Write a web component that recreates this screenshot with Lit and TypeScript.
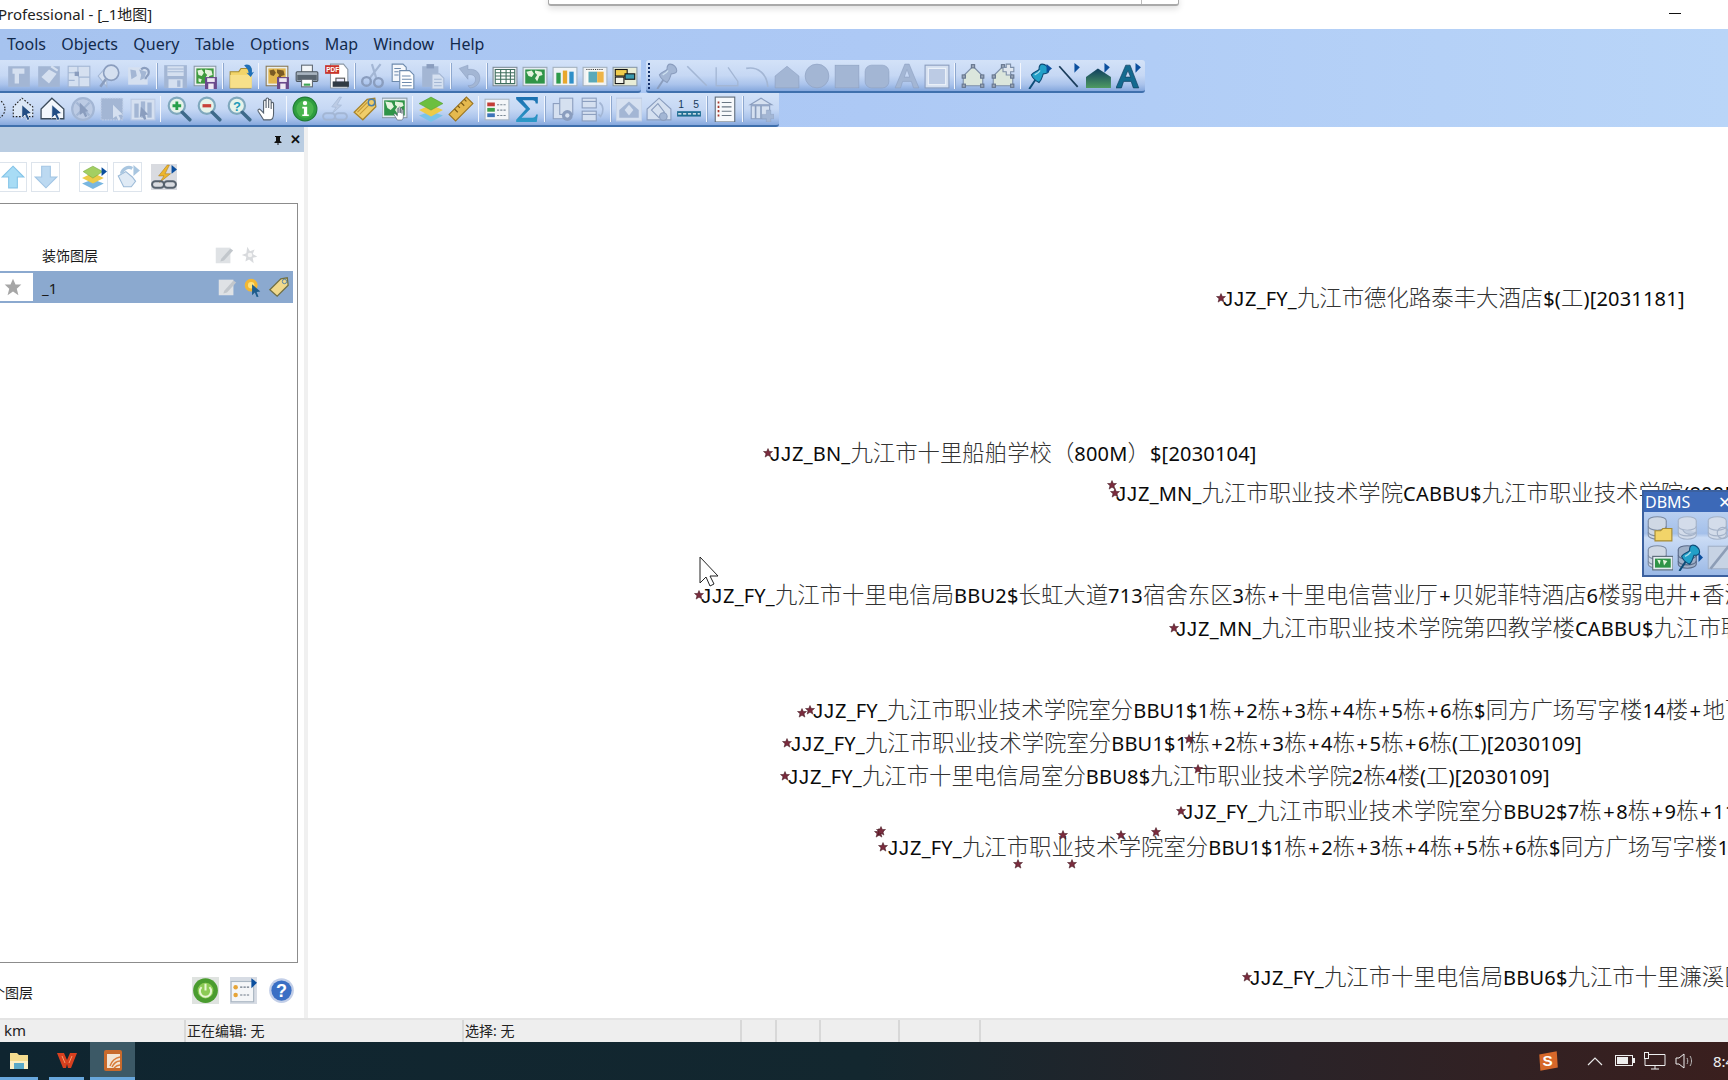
import { LitElement, html, css, svg, nothing } from "lit";
import { customElement } from "lit/decorators.js";

const DIS = "#a3b6d4", DIS2 = "#bccbe4", DIS3 = "#d5e0f0", DISD = "#8a9dbe";

const arrowTip = svg`<path d="M19 1l5 4-5 4z" fill="#0b4f9e"/>`;
const mag = (sign: unknown, fill = "#e6f3ea") => svg`<circle cx="10" cy="9" r="7.5" fill="${fill}" stroke="#7fa8bd" stroke-width="2"/><path d="M15 15l7 7" stroke="#3f6a8a" stroke-width="3.2" stroke-linecap="round"/>${sign}`;
const mapTile = svg`<rect x="2" y="3" width="20" height="18" fill="#e8eef0" stroke="#8a9aa8"/><rect x="4" y="5" width="16" height="14" fill="#3f9a3e"/><path d="M5 7l4-1 2 3-2 3-3-1zM12 6l6 1 1 4-3 1-2 5-2-3 2-3-2-2zM6 14l3 1-1 3-2-1z" fill="#e4f3dc"/>`;
const floppy = (c: string) => svg`<rect x="12" y="13" width="11" height="11" fill="${c}"/><rect x="14" y="14" width="7" height="3.5" fill="#efe9f3"/><rect x="15" y="19" width="5" height="5" fill="#efe9f3"/>`;
const cursorPt = (c = "#234e84") => svg`<path d="M11 8l9 8-4 .6 2.4 5-2.4 1-2.2-5-3 3z" fill="${c}" stroke="#fff" stroke-width=".6"/>`;
const disSq = svg`<rect x="2" y="3" width="20" height="19" fill="${DIS}"/>`;
const handles = svg`<path d="M12 3L21 12v9H3v-9z" fill="#dbe6dc" stroke="#7d8fa8"/><g fill="#9aa6b8" stroke="#66768e"><rect x="10.5" y="1.500" width="3" height="3"/><rect x="2" y="11" width="3" height="3"/><rect x="19" y="11" width="3" height="3"/><rect x="2" y="19.500" width="3" height="3"/><rect x="19" y="19.500" width="3" height="3"/></g>`;
const hand = svg`<path d="M7 22l-5-8c-.8-1.500 1-2.500 2-1.400l3 3V5c0-1.600 2.300-1.600 2.300 0v6V3c0-1.600 2.400-1.600 2.400 0v8V4.500c0-1.600 2.300-1.600 2.300 0V12V7c0-1.500 2.200-1.500 2.200 0v9c0 3-1 6-3 6z" fill="#fff" stroke="#55606c"/>`;
const db = (c = "#cfd8e4", e = "#7c8ba3") => svg`<ellipse cx="10" cy="5" rx="8" ry="3.500" fill="${c}" stroke="${e}"/><path d="M2 5v13c0 2 3.500 3.500 8 3.500s8-1.500 8-3.500V5" fill="${c}" stroke="${e}"/><path d="M2 10c0 2 3.500 3.500 8 3.500s8-1.500 8-3.500M2 15c0 2 3.500 3.500 8 3.500s8-1.500 8-3.500" fill="none" stroke="${e}"/>`;
const pin = (a: string, b: string) => svg`<path d="M3 24l6-9" stroke="${b}" stroke-width="1.800"/><path d="M5 11c2-3 5-3 7-5 0-3 1-5 3-5 3 0 6 3 6 6 0 2-2 3-5 3-1 2-1 5-4 8-2-1-6-4-7-7z" fill="${a}" stroke="${b}"/><path d="M8 11c2-1 4-2 5-4" stroke="#dff3fb" fill="none" stroke-width="1.200" opacity=".7"/>`;

const ICONS: Record<string, unknown> = {
  sq: disSq,
  pick1: svg`${disSq}<path d="M6 5h11v5h-5v9H8v-9H6z" fill="${DIS3}"/>`,
  pick2: svg`${disSq}<path d="M5 13l7-7 7 4-7 9z" fill="${DIS3}"/><path d="M14 3l6 4" stroke="${DIS3}" stroke-width="2"/>`,
  pick3: svg`<rect x="2" y="3" width="20" height="19" fill="${DIS3}" stroke="${DIS}"/><path d="M2 9h7l3 4h10M11 3v6M12 13v9M2 16h6" stroke="${DIS}" fill="none"/><rect x="8" y="8" width="4" height="4" fill="${DISD}"/>`,
  magPoly: svg`<path d="M2 12l8-9v19z" fill="${DIS3}" stroke="${DIS}"/><circle cx="14" cy="9" r="7" fill="${DIS3}" stroke="${DISD}" stroke-width="1.500"/><path d="M9 15l-5 7" stroke="${DISD}" stroke-width="2.400"/>`,
  mapQ: svg`<rect x="2" y="4" width="18" height="16" fill="${DIS3}"/><path d="M4 6l5 1 1 5-5 3zM12 6l7 2-2 6-4 2 1-5z" fill="${DIS}"/><path d="M14 6a4 4 0 0 1 7 3c0 3-3 3-3 6" fill="none" stroke="${DISD}" stroke-width="2"/>`,
  floppyD: svg`<rect x="2" y="2" width="21" height="21" fill="${DIS}"/><rect x="5" y="3" width="15" height="9" fill="${DIS3}"/><path d="M5 5.500h15M5 8h15" stroke="${DIS}"/><rect x="6" y="15" width="13" height="8" fill="${DIS3}"/><rect x="14" y="16" width="3" height="6" fill="${DIS}"/>`,
  mapSave: svg`${mapTile}${floppy("#6a4a8c")}`,
  folder: svg`<path d="M2 8h8l2-3h9v18H2z" fill="#f2d469" stroke="#a58a33"/><path d="M2 11h20v12H2z" fill="#f7e08a"/><path d="M15 2c4-2 8 1 7 7l2-1-3 5-4-4 2 .4c0-3-2-5-4-7z" fill="#1e6fb8"/>`,
  mapSave2: svg`<rect x="2" y="3" width="20" height="18" fill="#e8eef0" stroke="#8a7a58"/><rect x="4" y="5" width="16" height="14" fill="#e2b64f"/><path d="M5 7l4-1 2 3-2 3-3-1zM12 6l6 1 1 4-3 1-2 5-2-3 2-3-2-2z" fill="#7a5a24"/>${floppy("#6a4a8c")}`,
  printer: svg`<rect x="7" y="2" width="10" height="7" fill="#f3f6f8" stroke="#606a74"/><rect x="2" y="8" width="20" height="9" rx="1" fill="#a8b4c0" stroke="#4a545e"/><rect x="3" y="11" width="18" height="5" fill="#58646f"/><rect x="7" y="15" width="10" height="7" fill="#fff" stroke="#606a74"/><rect x="9" y="19" width="6" height="2" fill="#3fa455"/>`,
  pdf: svg`<path d="M6 1h12l4 5v17H6z" fill="#fff" stroke="#8a98a6"/><rect x="1" y="2" width="13" height="8" fill="#c8352b"/><text x="2" y="8.300" font-size="6" font-weight="700" fill="#fff" font-family="Liberation Sans">PDF</text><rect x="11" y="14" width="8" height="4" fill="#eef" stroke="#555"/><rect x="8" y="17" width="15" height="5" fill="#2f3a44"/>`,
  cut: svg`<path d="M9 14L19 1M15 14L11 1" stroke="${DIS}" stroke-width="2"/><circle cx="6" cy="17" r="4" fill="none" stroke="${DISD}" stroke-width="2.200"/><circle cx="17" cy="18" r="4" fill="none" stroke="${DISD}" stroke-width="2.200"/>`,
  copy: svg`<path d="M2 1h10l3 3v13H2z" fill="#f4f7fb" stroke="#6d8aad"/><path d="M9 7h9l4 4v13H9z" fill="#fff" stroke="#6d8aad"/><path d="M11 12h8M11 15h9M11 18h9M11 21h9M4 5h6M4 8h4M4 11h4" stroke="#6d8aad"/>`,
  paste: svg`<rect x="2" y="3" width="15" height="19" fill="${DIS}"/><rect x="6" y="1" width="7" height="4" fill="${DISD}"/><path d="M11 10h7l4 4v10H11z" fill="${DIS3}" stroke="${DIS}"/><path d="M13 15h7M13 18h7M13 21h7" stroke="${DIS}"/>`,
  undo: svg`<path d="M3 5l8-3v4c6-1 11 2 11 8 0 5-4 9-9 9l-2-2c5 0 7-3 7-6s-3-5-7-4v4z" fill="${DIS}" stroke="${DISD}" stroke-width=".5"/>`,
  table: svg`<rect x="1" y="4" width="22" height="17" fill="#f2f5f8" stroke="#7f8c98"/><path d="M3 6h18v13H3z" fill="#fff" stroke="#3f6d5d"/><path d="M3 9h18M3 12h18M3 15h18M8 6v13M13 6v13M17 6v13" stroke="#3f6d5d"/>`,
  mapG: svg`<rect x="1" y="4" width="22" height="17" fill="#e5ecf1" stroke="#9aa8b5"/><rect x="3" y="6" width="18" height="13" fill="#2f9447"/><path d="M4 8l5-1 2 3-2 3-3-1zM12 7l6 1 1 3-3 1-2 5-2-3 2-3-2-2z" fill="#e4f3dc"/>`,
  bars: svg`<rect x="1" y="4" width="22" height="17" fill="#eef3f7" stroke="#a4b2bf"/><rect x="4" y="9" width="4" height="10" fill="#2d9a4a"/><rect x="10" y="7" width="4" height="12" fill="#e8a72c"/><rect x="16" y="8" width="4" height="11" fill="#2f8fc8"/>`,
  layout: svg`<rect x="1" y="4" width="22" height="17" fill="#eef1f4" stroke="#a4b2bf"/><rect x="4" y="6" width="16" height="13" fill="#fbfbf6"/><path d="M4 6h16" stroke="#333" stroke-dasharray="1 1"/><rect x="6" y="8" width="8" height="10" fill="#5aa9b8"/><rect x="14" y="8" width="6" height="10" fill="#edb447"/>`,
  frames: svg`<rect x="1" y="4" width="22" height="17" fill="#e8ecd6" stroke="#8a9aa8"/><rect x="3" y="6" width="11" height="6" fill="#f0cc4c" stroke="#111"/><rect x="12" y="10" width="9" height="5" fill="#3a9ab0" stroke="#111"/><rect x="3" y="13" width="8" height="6" fill="#f4f4ea" stroke="#111"/>`,
  pinD: pin(DIS, DISD),
  line: svg`<path d="M3 3l18 18" stroke="${DIS}" stroke-width="1.500"/>`,
  poly: svg`<path d="M2 4v17h20v-4L13 4" fill="none" stroke="${DIS}" stroke-width="1.200"/>`,
  arc: svg`<path d="M2 5c10-2 19 4 20 17" fill="none" stroke="${DIS}" stroke-width="1.500"/>`,
  polygon: svg`<path d="M12 3l11 9v11H1V12z" fill="${DIS}" stroke="${DISD}" stroke-width=".5"/>`,
  ellipse: svg`<circle cx="12" cy="12" r="11" fill="${DIS}" stroke="${DISD}" stroke-width=".5"/>`,
  rect: svg`<rect x="1" y="2" width="22" height="21" fill="${DIS}" stroke="${DISD}" stroke-width=".5"/>`,
  rrect: svg`<rect x="1" y="2" width="22" height="21" rx="6" fill="${DIS}" stroke="${DISD}" stroke-width=".5"/>`,
  letter: svg`<path d="M1 23L10 1h4l9 22h-5l-2-6H8l-2 6zM9.500 13h5L12 6z" fill="${DIS}" stroke="${DISD}" stroke-width=".5"/>`,
  frame: svg`<rect x="1" y="2" width="22" height="21" fill="${DIS3}" stroke="${DISD}"/><rect x="4" y="5" width="16" height="15" fill="${DIS2}" stroke="#eef3fa"/>`,
  handles,
  handlesP: svg`${handles}<path d="M15 1h4v3h3v4h-3v3h-4V8h-3V4h3z" fill="#dfe6ee" stroke="#7d8fa8"/>`,
  pinB: svg`${pin("#22a0c8", "#0f4d78")}${arrowTip}`,
  lineB: svg`<path d="M3 3l17 19" stroke="#1a3d5c" stroke-width="1.600"/><path d="M17 0l5 4-5 5z" fill="#0b4f9e"/>`,
  polyB: svg`<defs><linearGradient id="gp" x1="0" y1="0" x2="0" y2="1"><stop offset="0" stop-color="#0e3d5e"/><stop offset="1" stop-color="#4e9a62"/></linearGradient></defs><path d="M11 5l12 8v10H0V13z" fill="url(#gp)"/><path d="M17 0l5 4-5 5z" fill="#0b4f9e"/>`,
  letterB: svg`<path d="M0 23L9 2h4l8 21h-5l-2-6H7l-2 6zM8.500 13h5L11 7z" fill="#146a8f" stroke="#0d3d5c" stroke-width=".6"/><path d="M18 0l5 4-5 5z" fill="#0b4f9e"/>`,
  selDot: svg`<circle cx="14" cy="12" r="9" fill="none" stroke="#222" stroke-dasharray="1.500 1.500"/>`,
  selPoly: svg`<path d="M11 2l10 8 0 9-18 0V10z" fill="#dbe7f6" stroke="#222" stroke-dasharray="1.500 1.500"/>${cursorPt()}`,
  selHouse: svg`<path d="M11 2l11 10v9H1V12z" fill="#f3f7fc" stroke="#3a4a5a" stroke-width="1.200"/>${cursorPt()}`,
  selCircle: svg`<circle cx="12" cy="12" r="10" fill="${DIS2}" stroke="${DIS}" stroke-width="2"/><path d="M6 6l12 12M18 6L6 18" stroke="${DIS}" stroke-width="2"/><path d="M9 6l8 8-3 .5 2 4-2 1-2-4-3 2z" fill="${DISD}"/>`,
  selRect: svg`<rect x="1" y="2" width="20" height="20" fill="${DIS}" stroke="${DIS2}" stroke-dasharray="1.500 1"/><path d="M12 8l9 9-4 .5 2 4-2 1-2-4-3 2z" fill="${DIS3}"/>`,
  selBars: svg`<rect x="1" y="3" width="22" height="19" fill="${DIS3}" stroke="${DIS2}"/><rect x="4" y="7" width="4" height="13" fill="${DIS}"/><rect x="10" y="5" width="4" height="15" fill="${DIS}"/><rect x="16" y="6" width="4" height="14" fill="${DIS}"/><path d="M10 10l7 7-3 .5 1 4-2 .5-2-4-2 2z" fill="${DISD}"/>`,
  zoomIn: mag(svg`<path d="M10 5v8M6 9h8" stroke="#27a04a" stroke-width="2.600"/>`),
  zoomOut: mag(svg`<path d="M6 9h8" stroke="#c8423a" stroke-width="3"/>`),
  zoomQ: mag(svg`<text x="6.500" y="13.500" font-size="12" font-weight="700" fill="#1e9ab8" font-family="Liberation Sans">?</text>`),
  hand,
  info: svg`<circle cx="12" cy="12" r="11" fill="#2f9e3f" stroke="#1f7a35"/><circle cx="12" cy="12" r="8" fill="#49b54e"/><circle cx="12" cy="6.500" r="2" fill="#fff"/><path d="M9.500 10H14v7h1.500v1.500h-6V17H11v-5.500H9.500z" fill="#fff"/>`,
  bolt: svg`<path d="M16 1L9 10l4 .5-4 6 9-8-4-.5 4-7z" fill="${DIS2}" stroke="${DIS}" stroke-width=".6"/><g fill="none" stroke="${DIS}" stroke-width="1.800"><rect x="1" y="16" width="11" height="6" rx="3"/><rect x="12" y="16" width="11" height="6" rx="3"/></g>`,
  tag: svg`<path d="M2 15L14 3l7-1 1 8-12 12z" fill="#f0cd6a" stroke="#a8842c" stroke-width="1.200"/><path d="M5 15l9-9M7 17l9-9" stroke="#c69b3a"/><circle cx="18" cy="6" r="3" fill="none" stroke="#4d7fa8" stroke-width="1.400"/>`,
  mapHand: svg`<rect x="0" y="2" width="23" height="18" fill="#e5ecf1" stroke="#8a9aa8"/><rect x="2" y="4" width="19" height="14" fill="#2f9447"/><path d="M3 5l6 1 2 4-3 3-3-2zM12 5l7 1 1 3-4 2-2 5-2-3 2-3-2-2z" fill="#e4f3dc"/><g transform="translate(10 9) scale(.6)">${hand}</g>`,
  layers: svg`<path d="M12 14l11 4-11 6L1 18z" fill="#79c3e8"/><path d="M12 8l11 5-11 6L1 13z" fill="#eccb48"/><path d="M12 1l11 6-11 6L1 7z" fill="#6bbf3f" stroke="#4d9a2b" stroke-width=".5"/>`,
  ruler: svg`<path d="M1 17L17 1l6 6L7 23z" fill="#e5b94e" stroke="#9a7420"/><path d="M6 12l3 3M9 9l2 2M12 6l3 3M15 3l2 2" stroke="#7a5a18"/>`,
  legend: svg`<rect x="1" y="3" width="22" height="19" fill="#f4f6f8" stroke="#a9b6c2"/><rect x="3" y="6" width="7" height="3.500" fill="#c23d36"/><rect x="3" y="11" width="7" height="3.500" fill="#3d9e4b"/><rect x="3" y="16" width="7" height="3.500" fill="#3d73b8"/><path d="M12 8h8M12 13h8M12 18h8" stroke="#7a8894" stroke-dasharray="2 1"/>`,
  sigma: svg`<defs><linearGradient id="gs" x1="0" y1="0" x2="0" y2="1"><stop offset="0" stop-color="#1a6fb0"/><stop offset="1" stop-color="#2d9ac8"/></linearGradient></defs><path d="M2 1h20v6h-2c0-2-1-3-3-3H8l7 8-8 8h10c2 0 3-1 3.500-3H22l-1 7H2v-2l9-10-9-9z" fill="url(#gs)"/>`,
  clip: svg`<rect x="3" y="7" width="12" height="14" fill="${DIS3}" stroke="${DISD}"/><rect x="9" y="2" width="12" height="15" fill="${DIS3}" stroke="${DISD}"/><circle cx="16" cy="18" r="5" fill="${DISD}"/><circle cx="16" cy="18" r="2" fill="${DIS3}"/>`,
  two: svg`<rect x="2" y="2" width="13" height="9" fill="${DIS3}" stroke="${DISD}"/><path d="M2 5h13" stroke="${DISD}"/><rect x="2" y="14" width="13" height="9" fill="${DIS3}" stroke="${DISD}"/><path d="M2 17h13" stroke="${DISD}"/><path d="M18 6c4 3 4 9 1 13l-2-2" fill="none" stroke="${DIS}" stroke-width="1.500"/>`,
  hFrame: svg`<rect x="0" y="2" width="24" height="21" fill="${DIS3}" stroke="${DIS2}"/><path d="M12 5l9 8v7H3v-7z" fill="${DIS}"/><path d="M12 8l4 5-4 5-4-5z" fill="${DIS3}"/>`,
  hDot: svg`<path d="M12 2l11 10v10H1V12z" fill="${DIS3}" stroke="${DISD}"/><path d="M5 13l6-6 6 8-5 5z" fill="none" stroke="${DISD}"/><circle cx="16" cy="19" r="3.500" fill="${DIS}" stroke="${DISD}"/>`,
  scale: svg`<text x="2" y="11" font-size="9.500" font-family="Liberation Sans" fill="#163a5c">1</text><text x="16" y="11" font-size="9.500" font-family="Liberation Sans" fill="#163a5c">5</text><rect x="1" y="14" width="22" height="5" fill="#1f6d92"/><path d="M2 16.500h20" stroke="#fff" stroke-dasharray="3 1.500"/>`,
  listDoc: svg`<rect x="3" y="1" width="18" height="23" fill="#f7f9fb" stroke="#5e6b78"/><path d="M6 5v2M6 9v2M6 13v2M6 17v2" stroke="#a5382f" stroke-width="1.600"/><path d="M9 6h9M9 10h9M9 14h9M9 18h9" stroke="#6a7784"/>`,
  building: svg`<path d="M2 8l10-6 10 6z" fill="${DIS3}" stroke="${DISD}"/><rect x="3" y="9" width="17" height="12" fill="${DIS3}" stroke="${DISD}"/><path d="M7 9v12M12 9v12" stroke="${DISD}" stroke-width="1.500"/><path d="M17 13h4v4h3v4h-3v3h-4v-3h-4v-4h4z" fill="${DIS}" stroke="${DISD}" stroke-width=".4"/>`,
  up: svg`<path d="M12 2l10 10h-6v10H8V12H2z" fill="#a8dcf5" stroke="#85c4e8"/>`,
  down: svg`<path d="M12 22L2 12h6V2h8v10h6z" fill="#bcd9f1" stroke="#a2c5e4"/>`,
  layersA: svg`<path d="M11 14l10 4-10 5L1 18z" fill="#79b6e0"/><path d="M11 8l10 5-10 5L1 13z" fill="#eccb48"/><path d="M11 2l9 5-9 6-9-6z" fill="#a3cf62" stroke="#6ea438" stroke-width=".5"/><path d="M19 3l5 4-5 4z" fill="#0b4f9e"/>`,
  undoA: svg`<path d="M3 11l7-4 6 5 3 4-4 5H8z" fill="#dfeaf5" stroke="#9dbbd8"/><path d="M6 9c1-5 6-7 10-5" stroke="#a9c6e0" fill="none" stroke-width="3"/><path d="M17 1l6 5-6 5z" fill="#a9c6e0"/>`,
  boltA: svg`<rect width="24" height="24" fill="#d9dbe0"/><path d="M15 1L7 11h5l-4 6 10-8h-5l4-8z" fill="#edb62c" stroke="#a7781a" stroke-width=".5"/><g fill="none" stroke="#55606c" stroke-width="1.800"><rect x="1" y="16" width="11" height="6" rx="3"/><rect x="12" y="16" width="11" height="6" rx="3"/></g><path d="M19 1l5 4-5 4z" fill="#0b4f9e"/>`,
  edit: svg`<rect x="3" y="4" width="16" height="17" fill="#dfe2e5"/><path d="M9 16l10-11 3 2-10 11-4 1z" fill="#c2c7cc"/>`,
  gear: svg`<path d="M9 3l3 5 5-2-2 5 5 3-5 1 1 6-5-4-4 2 1-5-5-2 5-2z" fill="#d8dadd"/><circle cx="12" cy="12" r="2.500" fill="#f5f5f5"/>`,
  bulb: svg`<circle cx="10" cy="10" r="7" fill="#f2b733"/><circle cx="10" cy="10" r="3.500" fill="#ffe27a"/><path d="M11 9l9 8-4 .5 2 5-2 .5-2-5-3 3z" fill="#1d5c8c"/>`,
  tagS: svg`<path d="M2 15L14 3l7-1 1 8-12 12z" fill="#f0d98c" stroke="#6f6f45" stroke-width="1.400"/><circle cx="18" cy="6" r="2.400" fill="none" stroke="#4d7fa8"/>`,
  power: svg`<rect width="24" height="24" fill="#dfe3e0"/><circle cx="12" cy="12" r="11" fill="#4a9c2f"/><circle cx="12" cy="12" r="7" fill="#8ccb55"/><path d="M8.500 9a5 5 0 1 0 7 0M12 6v6" fill="none" stroke="#e6f6d2" stroke-width="1.800"/>`,
  listA: svg`<rect width="24" height="24" fill="#d7dce4"/><rect x="1" y="4" width="20" height="18" fill="#f4f6f8" stroke="#a9b6c2"/><circle cx="5" cy="9" r="2" fill="#e6a437"/><circle cx="5" cy="16" r="2" fill="#e6a437"/><path d="M9 9h9M9 16h9" stroke="#6a7784" stroke-dasharray="2 1"/><path d="M19 1l5 4-5 5z" fill="#0b4f9e"/>`,
  help: svg`<circle cx="12" cy="12" r="11" fill="#c3cfe8"/><circle cx="12" cy="12" r="9" fill="#3a6fc4"/><text x="7" y="18" font-size="16" font-weight="700" fill="#fff" font-family="Liberation Sans">?</text>`,
  dbOpen: svg`${db()}<path d="M8 14h5l2-2h8v11H8z" fill="#f2d469" stroke="#a58a33"/>`,
  dbD1: svg`${db("#d3dcea", "#a4b2c8")}<path d="M6 13a7 6 0 0 0 12 2" fill="#c0cde0" stroke="#a4b2c8"/>`,
  dbD2: svg`${db("#d3dcea", "#a4b2c8")}<circle cx="15" cy="16" r="5" fill="none" stroke="#a4b2c8"/>`,
  dbMap: svg`${db()}<rect x="6" y="11" width="18" height="12" fill="#e5ecf1" stroke="#5a6a78"/><rect x="8" y="13" width="14" height="8" fill="#2f9447"/><path d="M10 14l3 .5-1 4zM15 14l4 1-3 4z" fill="#e4f3dc"/>`,
  dbPin: svg`${db("#9fb0c8", "#5a6a88")}${pin("#22a0c8", "#0f4d78")}<path d="M20 8l4 4-4 4z" fill="#0b4f9e"/>`,
  slash: svg`<rect x="2" y="2" width="20" height="20" fill="#c7d3e4" stroke="#a4b2c8"/><path d="M4 22L20 2" stroke="#8d9db6" stroke-width="2.400"/>`,
};

const ic = (name: string) => html`<svg class="ic" viewBox="0 0 24 24" aria-hidden="true">${ICONS[name] ?? nothing}</svg>`;
const S = "|";
const tb = (items: string[]) => items.map((n) => (n === S ? html`<i class="sep"></i>` : html`<span class="cell">${ic(n)}</span>`));

const ROW1A = ["sq", "pick1", "pick2", "pick3", "magPoly", "mapQ", S, "floppyD", "mapSave", S, "folder", S, "mapSave2", "printer", "pdf", S, "cut", "copy", "paste", S, "undo", S, "table", "mapG", "bars", "layout", "frames"];
const ROW1B = ["pinD", "line", "poly", "arc", "polygon", "ellipse", "rect", "rrect", "letter", "frame", S, "handles", "handlesP", S, "pinB", "lineB", "polyB", "letterB"];
const ROW2 = ["selDot", "selPoly", "selHouse", "selCircle", "selRect", "selBars", S, "zoomIn", "zoomOut", "zoomQ", "hand", S, "info", "bolt", "tag", "mapHand", S, "layers", "ruler", S, "legend", "sigma", S, "clip", "two", S, "hFrame", "hDot", "scale", S, "listDoc", S, "building"];
const MENU = ["Tools", "Objects", "Query", "Table", "Options", "Map", "Window", "Help"];

// Map features sit at their own coordinates on the canvas: [star x, star y, text left, text y, label].
const LABELS: [number, number, number, number, string][] = [
  [1221, 298, 1223, 298, "JJZ_FY_九江市德化路泰丰大酒店$(工)[2031181]"],
  [768, 453, 770, 453, "JJZ_BN_九江市十里船舶学校（800M）$[2030104]"],
  [1115, 493, 1116, 493, "JJZ_MN_九江市职业技术学院CABBU$九江市职业技术学院(800M)"],
  [699, 595, 701, 595, "JJZ_FY_九江市十里电信局BBU2$长虹大道713宿舍东区3栋+十里电信营业厅+贝妮菲特酒店6楼弱电井+香溪"],
  [1174, 628, 1176, 628, "JJZ_MN_九江市职业技术学院第四教学楼CABBU$九江市职业技术学院"],
  [802, 713, 813, 710, "JJZ_FY_九江市职业技术学院室分BBU1$1栋+2栋+3栋+4栋+5栋+6栋$同方广场写字楼14楼+地下室"],
  [787, 743, 791, 743, "JJZ_FY_九江市职业技术学院室分BBU1$1栋+2栋+3栋+4栋+5栋+6栋(工)[2030109]"],
  [785, 776, 788, 776, "JJZ_FY_九江市十里电信局室分BBU8$九江市职业技术学院2栋4楼(工)[2030109]"],
  [1181, 811, 1183, 811, "JJZ_FY_九江市职业技术学院室分BBU2$7栋+8栋+9栋+11栋"],
  [883, 847, 888, 847, "JJZ_FY_九江市职业技术学院室分BBU1$1栋+2栋+3栋+4栋+5栋+6栋$同方广场写字楼14楼"],
  [1247, 977, 1250, 977, "JJZ_FY_九江市十里电信局BBU6$九江市十里濂溪区"],
];
const STARS: [number, number][] = [[1112, 485], [810, 710], [879, 833], [881, 831], [1063, 835], [1121, 835], [1156, 832], [1018, 864], [1072, 864], [1189, 739], [1198, 769]];
const MAP_X = 308, MAP_Y = 127;

const runs = (s: string) => s.split(/([\u3000-\u9fff\uff00-\uffef]+|J+|\+)/).filter(Boolean).map((p) => {
  if (/[\u3000-\u9fff\uff00-\uffef]/.test(p)) return html`<span class="cjk">${p}</span>`;
  if (p[0] === "J") return html`<span class="j">${p}</span>`;
  if (p === "+") return html`<span class="lat plus">${p}</span>`;
  return html`<span class="lat">${p}</span>`;
});

const star = (x: number, y: number) => html`<svg class="star" viewBox="0 0 10 10" style="left:${x - MAP_X - 5}px;top:${y - MAP_Y - 5}px"><path d="M5 .5l1.300 3h3.200L7 5.700l.9 3.400L5 7.300 2.100 9.100 3 5.700.5 3.500h3.200z"/></svg>`;

@customElement("app-root")
export class AppRoot extends LitElement {
  static styles = css`
    :host { display: block; width: 1728px; height: 1080px; overflow: hidden; position: relative; background: #fff;
      font-family: "Noto Sans", "Noto Sans CJK SC", sans-serif; color: #1a1a1a; }
    .app { display: flex; flex-direction: column; height: 1080px; width: 1728px; overflow: hidden; }
    .title { height: 29px; flex: none; display: flex; align-items: center; justify-content: space-between; background: #fff; font-size: 15px; color: #222; padding-bottom: 2px; box-sizing: border-box; }
    .title span { margin-left: -2px; }
    .min { width: 12px; height: 1.500px; background: #111; margin-right: 47px; }
    .band { flex: none; height: 98px; background: linear-gradient(90deg, #a6c3ef, #adc9f5 50%, #b9d5f8); overflow: hidden; }
    .menu { height: 31px; display: flex; align-items: center; gap: 15.400px; padding: 0 0 2px 7px; box-sizing: border-box; font-size: 16px; color: #122a4c; }
    .row { height: 33px; display: flex; }
    .row.r2 { height: 34px; }
    .bar { display: flex; align-items: center; height: 100%; box-sizing: border-box; background: linear-gradient(180deg, #d3e2f8 0%, #c6d8f4 50%, #abc4ec 78%, #86a8dd 100%);
      border-bottom: 2px solid #3f70ad; border-radius: 0 0 3px 0; }
    .bar.a { margin-left: -26px; padding-right: 1px; }
    .bar.b { margin-left: 5px; padding-right: 1px; border-radius: 3px; }
    .bar.c { margin-left: -22px; padding-right: 3px; }
    .grip { width: 6px; height: 26px; background: repeating-linear-gradient(180deg, #14306a 0 2px, transparent 2px 4px); background-size: 2px 100%; background-repeat: no-repeat; background-position: 2px 0; }
    .cell { width: 30px; height: 30px; display: flex; align-items: center; justify-content: center; flex: none; }
    .ic { width: 26px; height: 26px; display: block; }
    .sep { width: 6px; height: 26px; flex: none; background: linear-gradient(90deg, transparent 2px, #f2f6fd 2px, #f2f6fd 3px, #8ea8cf 3px, #8ea8cf 3.500px, transparent 3.500px); }
    .main { flex: 1; display: flex; min-height: 0; position: relative; }
    .panel { width: 304px; flex: none; display: flex; flex-direction: column; background: #fff; }
    .phead { height: 25px; flex: none; background: #bacde2; display: flex; align-items: center; justify-content: flex-end; gap: 7px; padding-right: 3px; font: 700 13px "Liberation Sans", sans-serif; color: #111; }
    .phead svg { width: 10px; height: 10px; display: block; }
    .ptools { height: 51px; flex: none; box-sizing: border-box; padding: 10px 0 0; margin-left: -2px; display: flex; gap: 4px; align-items: flex-start; }
    .pbtn { width: 29px; height: 30px; flex: none; box-sizing: border-box; border: 1px solid #dde4ec; display: flex; align-items: center; justify-content: center; }
    .pbtn.gapl { margin-left: 15px; }
    .pbtn.more { margin-left: 1px; }
    .pbtn.flat { border-color: transparent; margin-left: 3px; }
    .pbtn .ic { width: 26px; height: 26px; }
    .list { flex: 1; margin: 0 6px 0 -2px; border: 1px solid #8c8c8c; padding-top: 39px; display: flex; flex-direction: column; min-height: 0; }
    .lrow { display: flex; align-items: center; height: 28px; padding-left: 43px; font-size: 14px; margin-right: 4px; box-sizing: border-box; }
    .lrow.head { padding-bottom: 5px; }
    .lrow .ic { width: 22px; height: 22px; }
    .lrow .ics { margin-left: auto; display: flex; gap: 4px; margin-right: 32px; }
    .lrow.sel { height: 32px; background: #8ba9cf; padding-left: 1px; }
    .lrow.sel .ics { margin-right: 3px; }
    .starbox { width: 33px; height: 28px; background: #fff; display: flex; align-items: center; padding-left: 3px; box-sizing: border-box; margin-right: 9px; }
    .starbox svg { width: 20px; height: 20px; fill: #a6a6a6; }
    .lname { font-size: 15px; padding-top: 2px; }
    .pfoot { height: 55px; flex: none; display: flex; align-items: center; font-size: 14px; padding-right: 9px; gap: 11px; }
    .pfoot .txt { margin-left: -9px; margin-right: auto; margin-top: 3px; }
    .pfoot .ic { width: 27px; height: 27px; }
    .strip { width: 4px; flex: none; background: #f0f0f0; }
    .map { flex: 1; position: relative; overflow: hidden; background: #fff; }
    .lab { position: absolute; white-space: nowrap; line-height: 30px; height: 30px; transform: translateY(-18px); color: #0a0a0a; }
    .lat { font: 20px "Noto Sans", sans-serif; letter-spacing: .2px; }
    .plus { padding: 0 1.400px; }
    .j { font: 20px "Liberation Sans", sans-serif; letter-spacing: 1px; }
    .cjk { font: 300 22.400px "Noto Sans CJK SC", sans-serif; color: #333; }
    .star { position: absolute; width: 10px; height: 10px; }
    .star path { fill: #7a2c3e; stroke: #3a1018; stroke-width: .5; }
    .cursor { position: absolute; left: 391px; top: 429px; width: 20px; height: 31px; }
    .dbms { position: absolute; left: 1642px; top: 363px; width: 100px; height: 87px; box-sizing: border-box; border: 2px solid #3c619f; background: linear-gradient(180deg, #cfdff6, #a4c0ea 50%, #cbdcf5 55%, #9bb9e6); display: flex; flex-direction: column; }
    .dtitle { height: 20px; flex: none; background: #3c69b8; color: #fff; font-size: 16px; display: flex; align-items: center; gap: 28px; padding-left: 1px; margin-bottom: 2px; }
    .drow { display: flex; height: 29px; align-items: center; gap: 3px; padding-left: 2px; }
    .drow .ic { width: 27px; height: 27px; flex: none; }
    .status { height: 24px; flex: none; display: flex; background: #eeeeee; border-top: 2px solid #e4e4e4; box-sizing: border-box; font-size: 14px; color: #222; line-height: 21px; }
    .scell { box-sizing: border-box; padding-left: 1px; border-left: 2px solid #d8d8d8; flex: none; white-space: nowrap; }
    .scell:first-child { border-left: 0; padding-left: 4px; font-size: 15px; }
    .task { height: 38px; flex: none; display: flex; align-items: stretch; background: linear-gradient(90deg, #0f2530 0%, #13272f 50%, #2a2328 75%, #3a1f1e 100%); position: relative; }
    .tbtn { display: flex; align-items: center; justify-content: center; box-sizing: border-box; border-bottom: 3px solid #68a7dc; flex: none; }
    .tbtn svg { width: 24px; height: 24px; display: block; }
    .tbtn.t1 { width: 38px; } .tbtn.t2 { width: 35px; margin-left: 11px; } .tbtn.t3 { width: 45px; margin-left: 6px; background: #3c5966; }
    .tray { margin-left: auto; display: flex; align-items: center; gap: 9px; color: #eee; margin-right: -15px; }
    .tray svg { display: block; }
    .t-s { width: 24px; height: 24px; margin-right: 18px; }
    .t-up { width: 16px; height: 10px; margin-right: 3px; }
    .t-bat { width: 20px; height: 12px; }
    .t-net { width: 22px; height: 18px; }
    .t-vol { width: 20px; height: 16px; }
    .clock { font-size: 15px; margin-left: 9px; width: 30px; white-space: nowrap; }
    .topwin { position: absolute; left: 548px; top: -6px; width: 629px; height: 9px; background: #fff; border: 1px solid #a9a9a9; border-bottom: 2px solid #aaa; border-radius: 3px; box-shadow: 0 3px 6px rgba(0,0,0,.12); display: flex; justify-content: flex-end; }
    .topwin i { width: 36px; border-left: 1px solid #bbb; }
  `;

  render() {
    return html`
      <div class="app">
        <div class="title"><span>Professional - [_1地图]</span><i class="min"></i></div>
        <div class="band">
          <div class="menu">${MENU.map((m) => html`<span>${m}</span>`)}</div>
          <div class="row">
            <div class="bar a">${tb(ROW1A)}</div>
            <div class="bar b"><i class="grip"></i>${tb(ROW1B)}</div>
          </div>
          <div class="row r2"><div class="bar c">${tb(ROW2)}</div></div>
        </div>
        <div class="main">
          <aside class="panel">
            <div class="phead">
              <svg viewBox="0 0 10 10"><path d="M2 1h6v1H7v4l1.500 1v1H5.500v2h-1V8H1.500V7L3 6V2H2z" fill="#111"/></svg>
              <span>✕</span>
            </div>
            <div class="ptools">
              <span class="pbtn">${ic("up")}</span>
              <span class="pbtn">${ic("down")}</span>
              <span class="pbtn gapl">${ic("layersA")}</span>
              <span class="pbtn more">${ic("undoA")}</span>
              <span class="pbtn flat">${ic("boltA")}</span>
            </div>
            <div class="list">
              <div class="lrow head"><span>装饰图层</span><span class="ics">${ic("edit")}${ic("gear")}</span></div>
              <div class="lrow sel">
                <span class="starbox"><svg viewBox="0 0 24 24"><path d="M12 2l3 7h7l-5.500 5 2 8-6.500-4.500L5.500 22l2-8L2 9h7z"/></svg></span>
                <span class="lname">_1</span>
                <span class="ics">${ic("edit")}${ic("bulb")}${ic("tagS")}</span>
              </div>
            </div>
            <div class="pfoot"><span class="txt">个图层</span>${ic("power")}${ic("listA")}${ic("help")}</div>
          </aside>
          <div class="strip"></div>
          <section class="map">
            ${LABELS.map(([sx, sy, tx, ty, t]) => html`
              <div class="lab" style="left:${tx - MAP_X}px;top:${ty - MAP_Y}px">${runs(t)}</div>
              ${star(sx, sy)}`)}
            ${STARS.map(([x, y]) => star(x, y))}
            <svg class="cursor" viewBox="0 0 20 31"><path d="M1 1v26l6-6 4 9 4-2-4-8h8z" fill="#fff" stroke="#222" stroke-width="1"/></svg>
          </section>
          <div class="dbms">
            <div class="dtitle"><span>DBMS</span><span>✕</span></div>
            <div class="drow">${ic("dbOpen")}${ic("dbD1")}${ic("dbD2")}</div>
            <div class="drow">${ic("dbMap")}${ic("dbPin")}${ic("slash")}</div>
          </div>
        </div>
        <div class="status">
          <div class="scell" style="width:184px">km</div>
          <div class="scell" style="width:278px">正在编辑: 无</div>
          <div class="scell" style="width:278px">选择: 无</div>
          <div class="scell" style="width:35px"></div>
          <div class="scell" style="width:44px"></div>
          <div class="scell" style="width:79px"></div>
          <div class="scell" style="width:81px"></div>
          <div class="scell" style="width:2px"></div>
        </div>
        <footer class="task">
          <span class="tbtn t1"><svg viewBox="0 0 24 24"><path d="M3 5h7l2 2h9v14H3z" fill="#f4dc8e"/><path d="M3 13h18v8H3z" fill="#fbefc4"/><path d="M7 15h10v6H7z" fill="#5aa9c8"/></svg></span>
          <span class="tbtn t2"><svg viewBox="0 0 24 24"><path d="M2 5h7l3 7 3-7h7l-6 15h-3l-1-4-1 4H8z" fill="#d8401f"/><path d="M7 8l3 7M17 8l-3 7" stroke="#f39b6a" fill="none"/></svg></span>
          <span class="tbtn t3"><svg viewBox="0 0 24 24"><rect x="3" y="2" width="18" height="21" rx="2" fill="#c86a2c"/><path d="M6 6h13v14H6z" fill="#f2e4d4"/><path d="M9 18c2-6 5-8 10-9M11 19c2-4 4-6 8-6M13 20c2-2 3-3 6-3" stroke="#d87a38" fill="none" stroke-width="1.400"/></svg></span>
          <div class="tray">
            <svg class="t-s" viewBox="0 0 22 22"><path d="M3 5l16-3 1 15-16 3z" fill="#d6682a"/><text x="6" y="16" font-size="14" font-weight="700" fill="#fff" font-family="Liberation Sans">S</text></svg>
            <svg class="t-up" viewBox="0 0 16 10"><path d="M1 9l7-7 7 7" fill="none" stroke="#e8e8e8" stroke-width="1.200"/></svg>
            <svg class="t-bat" viewBox="0 0 20 12"><rect x=".5" y=".5" width="17" height="10" fill="none" stroke="#eee"/><rect x="2" y="2" width="11" height="7" fill="#eee"/><rect x="18" y="3" width="2" height="5" fill="#eee"/></svg>
            <svg class="t-net" viewBox="0 0 22 18"><path d="M5 2.500h16v11H1V6" fill="none" stroke="#eee"/><rect x=".5" y=".5" width="4" height="6" fill="none" stroke="#eee"/><path d="M11 14v3M7 17h8" stroke="#eee"/></svg>
            <svg class="t-vol" viewBox="0 0 20 16"><path d="M1 5h3l5-4v14l-5-4H1z" fill="none" stroke="#eee"/><path d="M12 5c1 2 1 4 0 6M15 3c2 3 2 7 0 10" fill="none" stroke="#bbb"/></svg>
            <span class="clock">8:45</span>
          </div>
        </footer>
      </div>
      <div class="topwin"><i></i></div>
    `;
  }
}
